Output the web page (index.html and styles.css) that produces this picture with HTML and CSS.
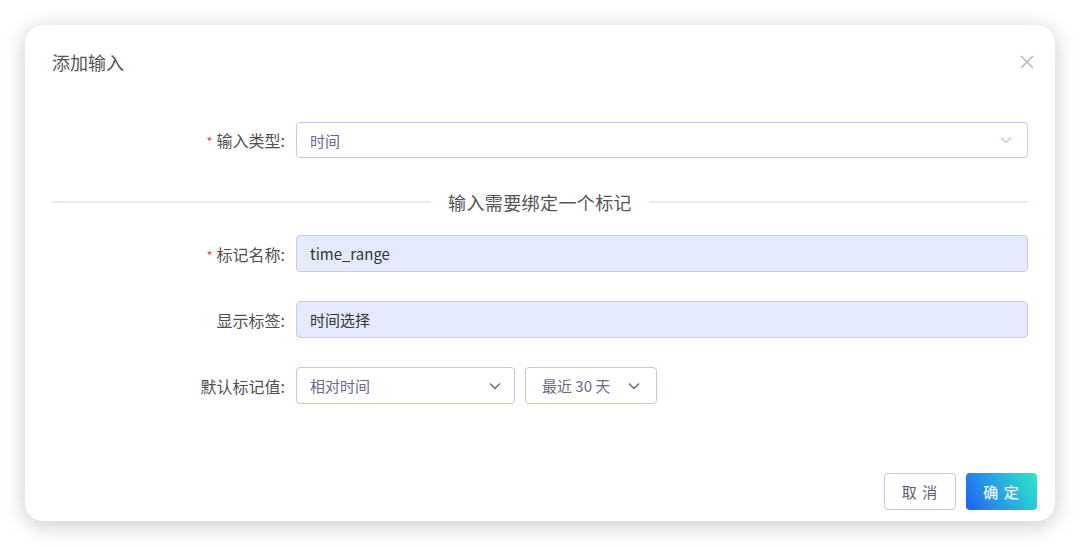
FILE: index.html
```html
<!DOCTYPE html>
<html lang="zh">
<head>
<meta charset="utf-8">
<title>添加输入</title>
<link rel="stylesheet" href="styles.css">
</head>
<body>
<div class="page">
  <div class="dialog">
    <div class="header">
      <span class="title">添加输入</span>
      <span class="close" aria-label="关闭">
        <svg width="14" height="14" viewBox="0 0 14 14"><path d="M1 1L13 13M13 1L1 13" stroke="#b4b4bc" stroke-width="1.4" fill="none"/></svg>
      </span>
    </div>
    <div class="form">
      <div class="row row-first">
        <label class="label"><span class="req">*</span>输入类型:</label>
        <div class="control select select-full">
          <span class="value">时间</span>
          <svg class="chev light" width="12" height="8" viewBox="0 0 12 8"><path d="M1 1.5L6 6.5L11 1.5" stroke="#c0c0e6" stroke-width="1.2" fill="none"/></svg>
        </div>
      </div>
      <div class="divider">
        <span class="line"></span>
        <span class="divider-text">输入需要绑定一个标记</span>
        <span class="line"></span>
      </div>
      <div class="row">
        <label class="label"><span class="req">*</span>标记名称:</label>
        <div class="control input filled"><span class="value dark">time_range</span></div>
      </div>
      <div class="row">
        <label class="label">显示标签:</label>
        <div class="control input filled"><span class="value dark">时间选择</span></div>
      </div>
      <div class="row">
        <label class="label">默认标记值:</label>
        <div class="inline">
          <div class="control select select-mid">
            <span class="value">相对时间</span>
            <svg class="chev" width="12" height="8" viewBox="0 0 12 8"><path d="M1 1.5L6 6.5L11 1.5" stroke="#666" stroke-width="1.3" fill="none"/></svg>
          </div>
          <div class="control select select-small">
            <span class="value">最近 30 天</span>
            <svg class="chev" width="12" height="8" viewBox="0 0 12 8"><path d="M1 1.5L6 6.5L11 1.5" stroke="#666" stroke-width="1.3" fill="none"/></svg>
          </div>
        </div>
      </div>
    </div>
    <div class="footer">
      <button class="btn btn-cancel">取 消</button>
      <button class="btn btn-ok">确 定</button>
    </div>
  </div>
</div>
</body>
</html>
```

FILE: styles.css
```css
* { box-sizing: border-box; }
html, body {
  margin: 0;
  background: #ffffff;
  font-family: "Noto Sans CJK SC", "Noto Sans", sans-serif;
}
.page {
  padding: 25px;
  width: 1080px;
  height: 547px;
}
.dialog {
  width: 1030px;
  height: 496px;
  background: #fff;
  border-radius: 18px;
  box-shadow: 0 4px 22px rgba(0, 0, 0, 0.22);
  display: flex;
  flex-direction: column;
  padding: 0 27px;
}
.header {
  display: flex;
  justify-content: space-between;
  align-items: center;
  height: 24px;
  margin-top: 25px;
}
.title {
  font-size: 18px;
  color: #555;
  line-height: 24px;
}
.close {
  display: flex;
  margin-right: -6px;
}
.form {
  margin-top: 48px;
}
.row {
  display: grid;
  grid-template-columns: 244px 1fr;
  align-items: center;
  margin-bottom: 29px;
}
.row-first { margin-bottom: 34px; }
.label {
  text-align: right;
  padding-right: 11px;
  font-size: 16px;
  color: #505050;
}
.req {
  color: #f24a4a;
  margin-right: 4px;
  font-size: 13px;
}
.control {
  height: 37px;
  border: 1px solid #c6c6ec;
  border-radius: 4px;
  display: flex;
  align-items: center;
  padding: 0 13px;
  font-size: 15px;
}
.select { justify-content: space-between; }
.select-full { height: 36px; }
.value { color: #6a6a8e; }
.value.dark { color: #333; }
.filled {
  background: #e4ebfd;
  border-color: #c8cbec;
}
.inline {
  display: flex;
  gap: 10px;
}
.select-mid { width: 219px; }
.select-small { width: 132px; padding: 0 16px; }
.select-small .chev { margin-left: 8px; }
.chev { flex: none; }
.chev.light { margin-right: 2px; }
.divider {
  display: flex;
  align-items: center;
  margin-bottom: 23px;
  height: 20px;
}
.line {
  flex: 1;
  height: 2px;
  background: #e8e8fa;
}
.divider-text {
  padding: 0 18px;
  font-size: 18px;
  color: #555;
  letter-spacing: 0.4px;
}
.footer {
  margin-top: auto;
  margin-right: -9px;
  margin-bottom: 11px;
  display: flex;
  justify-content: flex-end;
  gap: 10px;
}
.btn {
  height: 37px;
  width: 72px;
  border-radius: 4px;
  font-family: inherit;
  font-size: 15px;
  letter-spacing: 1px;
  cursor: pointer;
}
.btn-cancel {
  background: #fff;
  border: 1px solid #c6c6ec;
  color: #5d5d7a;
}
.btn-ok {
  width: 71px;
  border: none;
  color: #eaf6ff;
  font-weight: 500;
  background: linear-gradient(60deg, #2160f2 0%, #27a8e2 50%, #2ee8c8 100%);
}
```
